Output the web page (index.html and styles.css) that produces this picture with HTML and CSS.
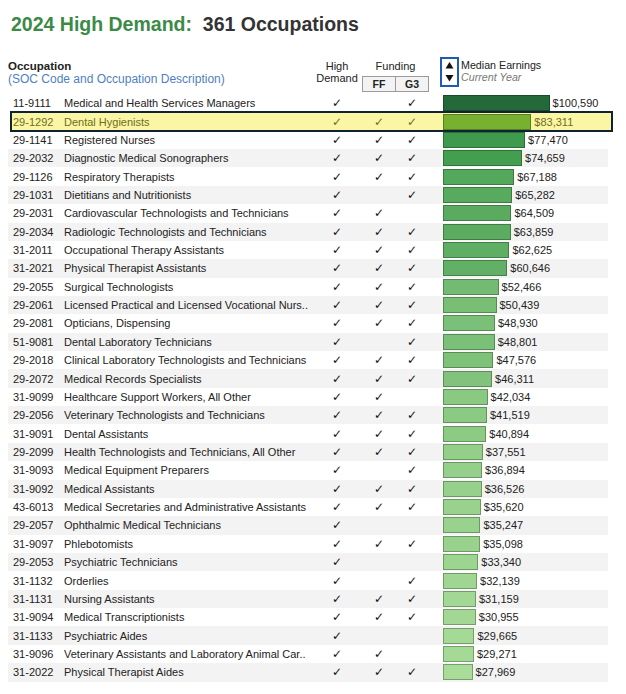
FILE: index.html
```html
<!DOCTYPE html>
<html>
<head>
<meta charset="utf-8">
<link rel="stylesheet" href="styles.css">
</head>
<body>
<div class="page">
  <h1 class="title"><span class="green">2024 High Demand:</span>&nbsp; 361 Occupations</h1>
  <div class="head">
    <div class="h-occ">
      <div class="h-occ-title">Occupation</div>
      <div class="h-occ-sub">(SOC Code and Occupation Description)</div>
    </div>
    <div class="h-hd"><span>High</span><span>Demand</span></div>
    <div class="h-fund">
      <div class="h-fund-label">Funding</div>
      <div class="fund-boxes"><span class="fbox">FF</span><span class="fbox">G3</span></div>
    </div>
    <div class="sort">
      <svg width="9" height="22" viewBox="0 0 9 22"><polygon points="4.5,1 8.5,7.5 0.5,7.5" fill="#111"/><polygon points="0.5,14 8.5,14 4.5,20.5" fill="#111"/></svg>
    </div>
    <div class="median">
      <div class="median-title">Median Earnings</div>
      <div class="median-sub">Current Year</div>
    </div>
  </div>
  <div class="rows">
    <div class="row"><span class="code">11-9111</span><span class="name">Medical and Health Services Managers</span><span class="c hd">✓</span><span class="c ff"></span><span class="c g3">✓</span><span class="barcell"><span class="bar" style="width:106.6px;background:rgb(35,105,58)"></span><span class="val">$100,590</span></span></div>
    <div class="row hl"><span class="code">29-1292</span><span class="name">Dental Hygienists</span><span class="c hd">✓</span><span class="c ff">✓</span><span class="c g3">✓</span><span class="barcell"><span class="bar" style="width:88.3px;background:rgb(120,176,48)"></span><span class="val">$83,311</span></span></div>
    <div class="row"><span class="code">29-1141</span><span class="name">Registered Nurses</span><span class="c hd">✓</span><span class="c ff">✓</span><span class="c g3">✓</span><span class="barcell"><span class="bar" style="width:82.1px;background:rgb(62,154,76)"></span><span class="val">$77,470</span></span></div>
    <div class="row"><span class="code">29-2032</span><span class="name">Diagnostic Medical Sonographers</span><span class="c hd">✓</span><span class="c ff">✓</span><span class="c g3">✓</span><span class="barcell"><span class="bar" style="width:79.1px;background:rgb(68,158,80)"></span><span class="val">$74,659</span></span></div>
    <div class="row"><span class="code">29-1126</span><span class="name">Respiratory Therapists</span><span class="c hd">✓</span><span class="c ff">✓</span><span class="c g3">✓</span><span class="barcell"><span class="bar" style="width:71.2px;background:rgb(84,168,92)"></span><span class="val">$67,188</span></span></div>
    <div class="row"><span class="code">29-1031</span><span class="name">Dietitians and Nutritionists</span><span class="c hd">✓</span><span class="c ff"></span><span class="c g3">✓</span><span class="barcell"><span class="bar" style="width:69.2px;background:rgb(88,170,95)"></span><span class="val">$65,282</span></span></div>
    <div class="row"><span class="code">29-2031</span><span class="name">Cardiovascular Technologists and Technicians</span><span class="c hd">✓</span><span class="c ff">✓</span><span class="c g3"></span><span class="barcell"><span class="bar" style="width:68.4px;background:rgb(90,171,96)"></span><span class="val">$64,509</span></span></div>
    <div class="row"><span class="code">29-2034</span><span class="name">Radiologic Technologists and Technicians</span><span class="c hd">✓</span><span class="c ff">✓</span><span class="c g3">✓</span><span class="barcell"><span class="bar" style="width:67.7px;background:rgb(91,172,97)"></span><span class="val">$63,859</span></span></div>
    <div class="row"><span class="code">31-2011</span><span class="name">Occupational Therapy Assistants</span><span class="c hd">✓</span><span class="c ff">✓</span><span class="c g3">✓</span><span class="barcell"><span class="bar" style="width:66.4px;background:rgb(94,174,99)"></span><span class="val">$62,625</span></span></div>
    <div class="row"><span class="code">31-2021</span><span class="name">Physical Therapist Assistants</span><span class="c hd">✓</span><span class="c ff">✓</span><span class="c g3">✓</span><span class="barcell"><span class="bar" style="width:64.3px;background:rgb(98,176,102)"></span><span class="val">$60,646</span></span></div>
    <div class="row"><span class="code">29-2055</span><span class="name">Surgical Technologists</span><span class="c hd">✓</span><span class="c ff">✓</span><span class="c g3">✓</span><span class="barcell"><span class="bar" style="width:55.6px;background:rgb(115,187,114)"></span><span class="val">$52,466</span></span></div>
    <div class="row"><span class="code">29-2061</span><span class="name">Licensed Practical and Licensed Vocational Nurs..</span><span class="c hd">✓</span><span class="c ff">✓</span><span class="c g3">✓</span><span class="barcell"><span class="bar" style="width:53.5px;background:rgb(120,190,117)"></span><span class="val">$50,439</span></span></div>
    <div class="row"><span class="code">29-2081</span><span class="name">Opticians, Dispensing</span><span class="c hd">✓</span><span class="c ff">✓</span><span class="c g3">✓</span><span class="barcell"><span class="bar" style="width:51.9px;background:rgb(123,192,120)"></span><span class="val">$48,930</span></span></div>
    <div class="row"><span class="code">51-9081</span><span class="name">Dental Laboratory Technicians</span><span class="c hd">✓</span><span class="c ff"></span><span class="c g3">✓</span><span class="barcell"><span class="bar" style="width:51.7px;background:rgb(123,192,120)"></span><span class="val">$48,801</span></span></div>
    <div class="row"><span class="code">29-2018</span><span class="name">Clinical Laboratory Technologists and Technicians</span><span class="c hd">✓</span><span class="c ff">✓</span><span class="c g3">✓</span><span class="barcell"><span class="bar" style="width:50.4px;background:rgb(126,194,122)"></span><span class="val">$47,576</span></span></div>
    <div class="row"><span class="code">29-2072</span><span class="name">Medical Records Specialists</span><span class="c hd">✓</span><span class="c ff">✓</span><span class="c g3">✓</span><span class="barcell"><span class="bar" style="width:49.1px;background:rgb(129,195,124)"></span><span class="val">$46,311</span></span></div>
    <div class="row"><span class="code">31-9099</span><span class="name">Healthcare Support Workers, All Other</span><span class="c hd">✓</span><span class="c ff">✓</span><span class="c g3"></span><span class="barcell"><span class="bar" style="width:44.6px;background:rgb(138,201,130)"></span><span class="val">$42,034</span></span></div>
    <div class="row"><span class="code">29-2056</span><span class="name">Veterinary Technologists and Technicians</span><span class="c hd">✓</span><span class="c ff">✓</span><span class="c g3">✓</span><span class="barcell"><span class="bar" style="width:44.0px;background:rgb(139,202,131)"></span><span class="val">$41,519</span></span></div>
    <div class="row"><span class="code">31-9091</span><span class="name">Dental Assistants</span><span class="c hd">✓</span><span class="c ff">✓</span><span class="c g3">✓</span><span class="barcell"><span class="bar" style="width:43.3px;background:rgb(140,203,132)"></span><span class="val">$40,894</span></span></div>
    <div class="row"><span class="code">29-2099</span><span class="name">Health Technologists and Technicians, All Other</span><span class="c hd">✓</span><span class="c ff">✓</span><span class="c g3">✓</span><span class="barcell"><span class="bar" style="width:39.8px;background:rgb(147,207,137)"></span><span class="val">$37,551</span></span></div>
    <div class="row"><span class="code">31-9093</span><span class="name">Medical Equipment Preparers</span><span class="c hd">✓</span><span class="c ff"></span><span class="c g3">✓</span><span class="barcell"><span class="bar" style="width:39.1px;background:rgb(149,208,138)"></span><span class="val">$36,894</span></span></div>
    <div class="row"><span class="code">31-9092</span><span class="name">Medical Assistants</span><span class="c hd">✓</span><span class="c ff">✓</span><span class="c g3">✓</span><span class="barcell"><span class="bar" style="width:38.7px;background:rgb(150,209,139)"></span><span class="val">$36,526</span></span></div>
    <div class="row"><span class="code">43-6013</span><span class="name">Medical Secretaries and Administrative Assistants</span><span class="c hd">✓</span><span class="c ff">✓</span><span class="c g3">✓</span><span class="barcell"><span class="bar" style="width:37.8px;background:rgb(152,210,140)"></span><span class="val">$35,620</span></span></div>
    <div class="row"><span class="code">29-2057</span><span class="name">Ophthalmic Medical Technicians</span><span class="c hd">✓</span><span class="c ff"></span><span class="c g3"></span><span class="barcell"><span class="bar" style="width:37.4px;background:rgb(152,210,141)"></span><span class="val">$35,247</span></span></div>
    <div class="row"><span class="code">31-9097</span><span class="name">Phlebotomists</span><span class="c hd">✓</span><span class="c ff">✓</span><span class="c g3">✓</span><span class="barcell"><span class="bar" style="width:37.2px;background:rgb(153,210,141)"></span><span class="val">$35,098</span></span></div>
    <div class="row"><span class="code">29-2053</span><span class="name">Psychiatric Technicians</span><span class="c hd">✓</span><span class="c ff"></span><span class="c g3"></span><span class="barcell"><span class="bar" style="width:35.3px;background:rgb(156,213,144)"></span><span class="val">$33,340</span></span></div>
    <div class="row"><span class="code">31-1132</span><span class="name">Orderlies</span><span class="c hd">✓</span><span class="c ff"></span><span class="c g3">✓</span><span class="barcell"><span class="bar" style="width:34.1px;background:rgb(159,214,146)"></span><span class="val">$32,139</span></span></div>
    <div class="row"><span class="code">31-1131</span><span class="name">Nursing Assistants</span><span class="c hd">✓</span><span class="c ff">✓</span><span class="c g3">✓</span><span class="barcell"><span class="bar" style="width:33.0px;background:rgb(161,216,147)"></span><span class="val">$31,159</span></span></div>
    <div class="row"><span class="code">31-9094</span><span class="name">Medical Transcriptionists</span><span class="c hd">✓</span><span class="c ff">✓</span><span class="c g3">✓</span><span class="barcell"><span class="bar" style="width:32.8px;background:rgb(162,216,147)"></span><span class="val">$30,955</span></span></div>
    <div class="row"><span class="code">31-1133</span><span class="name">Psychiatric Aides</span><span class="c hd">✓</span><span class="c ff"></span><span class="c g3"></span><span class="barcell"><span class="bar" style="width:31.4px;background:rgb(164,218,149)"></span><span class="val">$29,665</span></span></div>
    <div class="row"><span class="code">31-9096</span><span class="name">Veterinary Assistants and Laboratory Animal Car..</span><span class="c hd">✓</span><span class="c ff">✓</span><span class="c g3"></span><span class="barcell"><span class="bar" style="width:31.0px;background:rgb(165,218,150)"></span><span class="val">$29,271</span></span></div>
    <div class="row"><span class="code">31-2022</span><span class="name">Physical Therapist Aides</span><span class="c hd">✓</span><span class="c ff">✓</span><span class="c g3">✓</span><span class="barcell"><span class="bar" style="width:29.6px;background:rgb(168,220,152)"></span><span class="val">$27,969</span></span></div>
  </div>
</div>
</body>
</html>
```

FILE: styles.css
```css
* { box-sizing: border-box; }
html, body { margin: 0; padding: 0; background: #fff; }
body { font-family: "Liberation Sans", Arial, sans-serif; color: #222; }

.page { padding-top: 12px; width: 626px; }

.title {
  margin: 0 0 0 11px;
  font-size: 19.5px;
  line-height: 24px;
  font-weight: bold;
  color: #333;
  white-space: nowrap;
}
.title .green { color: #3b8a47; }

.head {
  display: flex;
  align-items: flex-start;
  height: 38px;
  margin: 20px 0 0 8px;
}
.h-occ { width: 312px; padding-top: 4px; }
.h-occ-title { font-size: 11.5px; font-weight: bold; line-height: 13px; color: #222; }
.h-occ-sub { font-size: 12px; line-height: 13px; color: #4f7fc0; }

.h-hd {
  width: 34px;
  padding-top: 4px;
  display: flex;
  flex-direction: column;
  align-items: center;
  font-size: 11px;
  line-height: 12px;
  color: #222;
  white-space: nowrap;
}

.h-fund { width: 67px; margin-left: 8px; padding-top: 4px; }
.h-fund-label { font-size: 11px; line-height: 12px; text-align: center; color: #222; }
.fund-boxes { display: flex; margin-top: 4px; height: 16px; }
.fbox {
  flex: 1;
  display: flex;
  align-items: center;
  justify-content: center;
  font-size: 10.5px;
  font-weight: bold;
  color: #222;
  background: #f3f3f3;
  border: 1px solid #9a9a9a;
}
.fbox + .fbox { border-left: none; }

.sort {
  width: 19px;
  height: 30px;
  margin: 1px 0 0 11px;
  border: 2px solid #1d5cb4;
  display: flex;
  align-items: center;
  justify-content: center;
}
.sort svg { display: block; }

.median { margin-left: 2px; padding-top: 3px; white-space: nowrap; }
.median-title { font-size: 10.7px; line-height: 12px; color: #222; }
.median-sub { font-size: 10.7px; line-height: 12px; font-style: italic; color: #777; }

.rows { margin-left: 8px; width: 600px; }
.row {
  display: flex;
  align-items: center;
  height: 18.36px;
  font-size: 11px;
  color: #222;
  white-space: nowrap;
}
.row:nth-child(even) { background: #f3f3f3; }

.code { width: 56px; padding-left: 5px; }
.name { width: 256px; overflow: hidden; }
.c {
  text-align: center;
  font-family: "DejaVu Sans", sans-serif;
  font-size: 12px;
  font-weight: bold;
  color: #111;
}
.hd { width: 34px; }
.ff { width: 50px; }
.g3 { width: 16px; }

.barcell { display: flex; align-items: center; margin-left: 23px; }
.bar {
  display: block;
  height: 16px;
  border: 1px solid rgba(0, 0, 0, 0.28);
}
.val { margin-left: 3px; font-size: 11px; }

.row.hl {
  position: relative;
  isolation: isolate;
  background: transparent;
  color: #6e6d1c;
}
.row.hl .c { color: #6e6d1c; }
.row.hl::after {
  content: "";
  position: absolute;
  left: 2px;
  right: -5px;
  top: -1px;
  bottom: -1px;
  border: 2px solid #0f2236;
  background: #fbf6a4;
  z-index: -1;
}
```
